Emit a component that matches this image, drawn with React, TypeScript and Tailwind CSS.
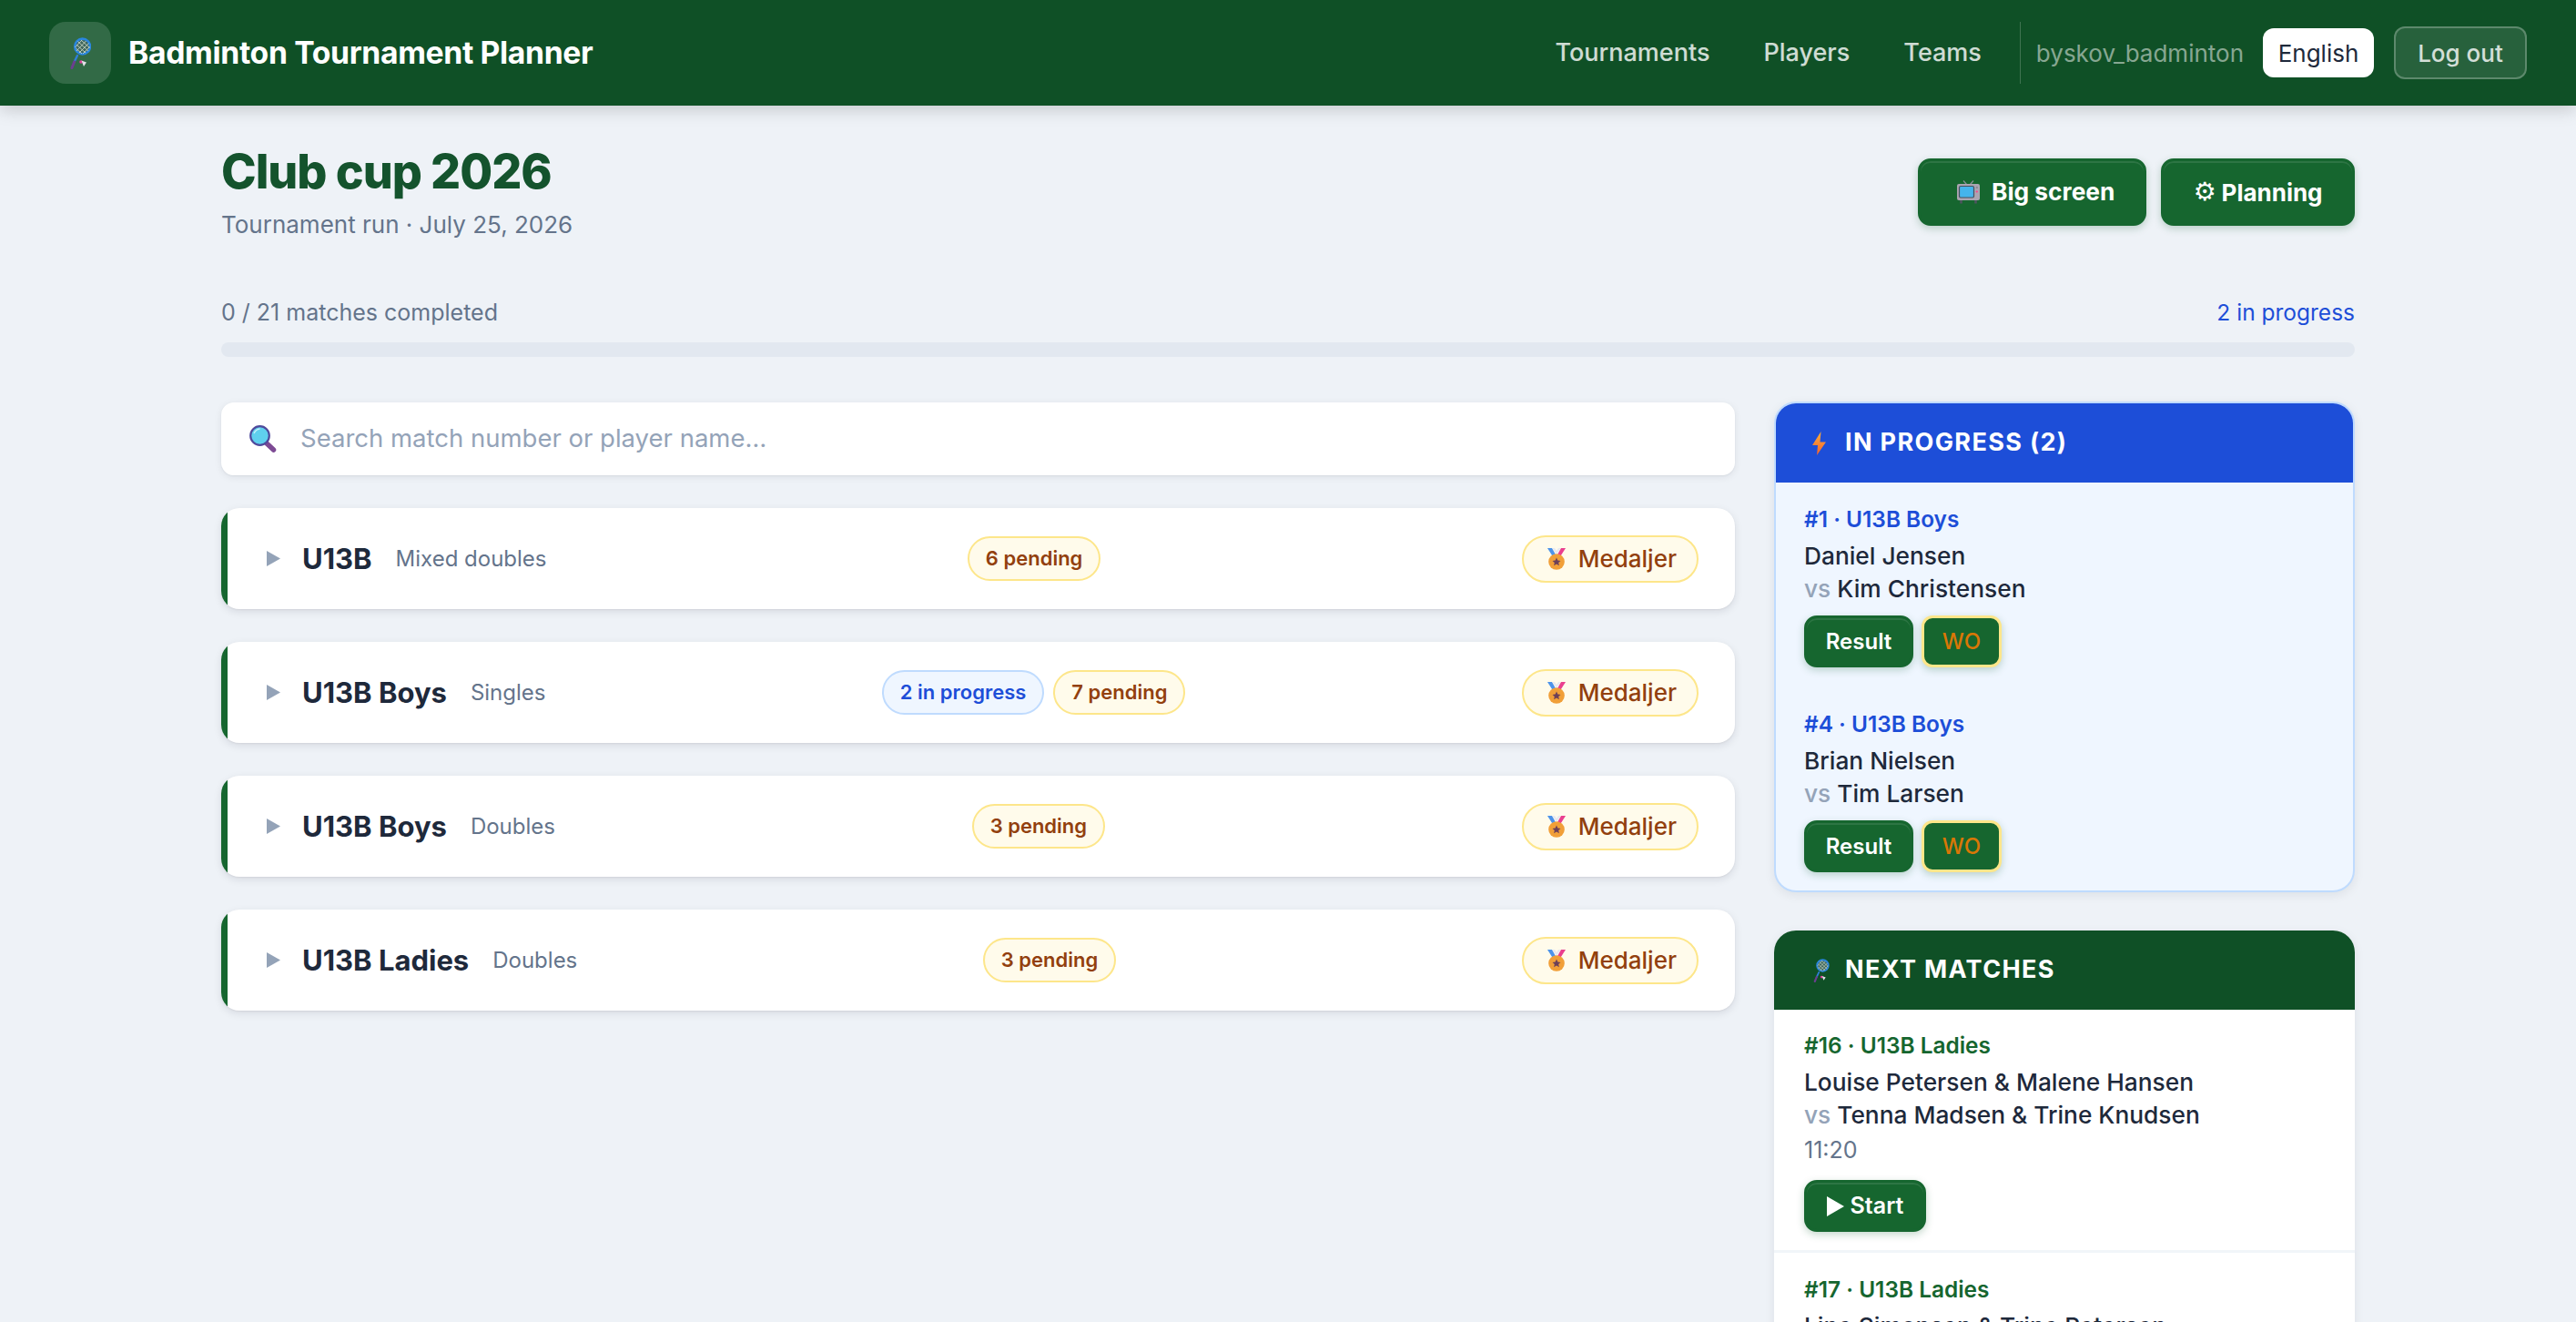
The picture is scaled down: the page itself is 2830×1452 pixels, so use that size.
import type { ReactNode } from 'react'

function RacketIcon({ className }: { className: string }) {
  return (
    <svg viewBox="0 0 24 35" className={className}>
      <path d="M9 20 L5.6 27" stroke="#2f7fd8" strokeWidth="2.4" strokeLinecap="round" />
      <path d="M5.6 27 L3 33.5" stroke="#6b3f8f" strokeWidth="3" strokeLinecap="round" />
      <circle cx="14.6" cy="10" r="8.4" fill="#3f665c" stroke="#2a86de" strokeWidth="2.6" />
      <path
        d="M8 8 L18 17 M9.5 4.5 L21 15 M13 3 L22.5 11.5 M7.5 12 L14 18 M6.5 11 L14 3 M8 15 L18.5 4 M11 17 L21.5 6.5 M15 18 L22.5 10.5"
        stroke="#c7d6c4"
        strokeWidth="0.9"
      />
      <circle cx="13" cy="27" r="1.8" fill="#e0409a" />
      <path d="M13.5 25.6 L19 27.6 L16 32 L14.6 28.4 Z" fill="#e4dfe8" />
    </svg>
  )
}

function SearchIcon() {
  return (
    <svg viewBox="0 0 30 30" className="h-[30px] w-[30px] shrink-0">
      <path d="M19 20 L26.5 27" stroke="#7d4a94" strokeWidth="5.5" strokeLinecap="round" />
      <circle cx="11.5" cy="11.5" r="10.3" fill="#5fd0ee" stroke="#4f4a9c" strokeWidth="2.2" />
      <path d="M5 9 Q7 4.5 11.5 4" stroke="#c4f1fb" strokeWidth="1.4" fill="none" />
    </svg>
  )
}

function TvIcon() {
  return (
    <svg viewBox="0 0 25 26" className="h-[26px] w-[25px] shrink-0">
      <path d="M10.5 4.5 L7 0.5 M14.5 4.5 L18 0.5" stroke="#8a8f98" strokeWidth="1.2" />
      <path d="M4.5 21 L4.5 25.5 M20.5 21 L20.5 25.5" stroke="#4f5460" strokeWidth="2.6" />
      <rect x="0" y="4" width="25" height="18" rx="2" fill="#aaa5b2" />
      <rect x="2.5" y="6.5" width="16" height="12.5" rx="1.5" fill="#45b4ec" stroke="#4a4f5a" strokeWidth="1.2" />
      <circle cx="21.8" cy="8" r="1.2" fill="#8d8a95" />
      <path d="M20.5 12.5 H23 M21.8 11.2 V13.8" stroke="#ef4d8f" strokeWidth="1" />
    </svg>
  )
}

function MedalIcon() {
  return (
    <svg viewBox="0 0 22 25" className="h-[25px] w-[22px] shrink-0">
      <path d="M1 1 L8 12 L11 10 L6 1 Z" fill="#4d93ea" />
      <path d="M21 1 L14 12 L11 10 L16 1 Z" fill="#ea3f8f" />
      <path d="M6.5 1 L11 8 L15.5 1 L13 1 L11 4 L9 1 Z" fill="#e8e8f0" />
      <circle cx="11" cy="16" r="8.8" fill="#f19f38" />
      <path d="M11 11.5 L12.4 14.6 L15.5 14.9 L13.2 17 L13.9 20.2 L11 18.5 L8.1 20.2 L8.8 17 L6.5 14.9 L9.6 14.6 Z" fill="#6d4058" />
    </svg>
  )
}

function BoltIcon() {
  return (
    <svg viewBox="0 0 15 26" className="h-[26px] w-[15px] shrink-0">
      <defs>
        <linearGradient id="bolt" x1="0" y1="0" x2="0" y2="1">
          <stop offset="0" stopColor="#fbb03b" />
          <stop offset="1" stopColor="#f4602f" />
        </linearGradient>
      </defs>
      <path d="M9.5 0 L0 15 L6 15 L5 26 L15 11.5 L8.5 11.5 Z" fill="url(#bolt)" />
    </svg>
  )
}

function Triangle({ className }: { className: string }) {
  return (
    <svg viewBox="0 0 10 12" preserveAspectRatio="none" className={className}>
      <path d="M0 0 L10 6 L0 12 Z" fill="currentColor" />
    </svg>
  )
}

function Pill({ tone, children }: { tone: 'amber' | 'blue'; children: ReactNode }) {
  return (
    <span
      className={
        tone === 'amber'
          ? 'rounded-full border-2 border-[#fde68a] bg-[#fffbeb] px-[18px] py-[8px] text-[22px] leading-[29px] font-semibold text-[#92400e]'
          : 'rounded-full border-2 border-[#bfdbfe] bg-[#eff6ff] px-[18px] py-[8px] text-[22px] leading-[29px] font-semibold text-[#1d4ed8]'
      }
    >
      {children}
    </span>
  )
}

function GreenButton({ children, className }: { children: ReactNode; className: string }) {
  return (
    <button
      className={`inline-flex items-center rounded-[14px] border-[3px] border-[#16662f] bg-[#16662f] text-white shadow-[inset_0_2px_0_rgba(255,255,255,0.1),0_3px_8px_rgba(22,101,52,0.25)] ${className}`}
    >
      {children}
    </button>
  )
}

const events = [
  { name: 'U13B', kind: 'Mixed doubles', progress: 0, pending: 6 },
  { name: 'U13B Boys', kind: 'Singles', progress: 2, pending: 7 },
  { name: 'U13B Boys', kind: 'Doubles', progress: 0, pending: 3 },
  { name: 'U13B Ladies', kind: 'Doubles', progress: 0, pending: 3 },
]

function EventRow({ event }: { event: (typeof events)[number] }) {
  return (
    <div className="flex h-[111px] items-center overflow-hidden rounded-[20px] bg-white pr-[40px] shadow-[0_1px_2px_rgba(15,23,42,0.06),0_3px_10px_rgba(15,23,42,0.1)]">
      <div className="mr-[43px] w-[7px] self-stretch bg-[#16662f]" />
      <Triangle className="mr-[24px] h-[17px] w-[15px] text-[#94a3b8]" />
      <span className="mr-[26px] text-[31px] leading-none font-bold text-[#1e293b]">{event.name}</span>
      <span className="text-[24px] leading-none text-[#64748b]">{event.kind}</span>
      <div className="flex flex-1 items-center justify-center gap-[10px]">
        {event.progress > 0 && <Pill tone="blue">{event.progress} in progress</Pill>}
        <Pill tone="amber">{event.pending} pending</Pill>
      </div>
      <span className="flex h-[52px] items-center gap-[13px] rounded-full border-2 border-[#fde68a] bg-[#fffbeb] pr-[22px] pl-[25px] text-[26px] font-medium text-[#92400e]">
        <MedalIcon />
        Medaljer
      </span>
    </div>
  )
}

function Names({ a, b }: { a: string; b: string }) {
  return (
    <div className="mt-[7px] text-[26.3px] leading-[36px] font-medium text-[#1e293b]">
      <div>{a}</div>
      <div>
        <span className="text-[#94a3b8]">vs</span> {b}
      </div>
    </div>
  )
}

function ActiveMatch({ no, a, b }: { no: number; a: string; b: string }) {
  return (
    <div className="px-[31px] pt-[24px] pb-[22px] last:pb-[20px]">
      <div className="text-[24.4px] leading-[32px] font-semibold text-[#1d4ed8]">#{no} · U13B Boys</div>
      <Names a={a} b={b} />
      <div className="mt-[11px] flex gap-[9px]">
        <GreenButton className="h-[57px] w-[120px] justify-center text-[24px] font-semibold">Result</GreenButton>
        <button className="h-[57px] w-[88px] rounded-[12px] border-[3px] border-[#fde68a] bg-[#16662f] text-[24px] font-medium text-[#d97706] shadow-[0_3px_8px_rgba(22,101,52,0.25)]">
          WO
        </button>
      </div>
    </div>
  )
}

export default function App() {
  return (
    <div className="h-[1452px] overflow-hidden bg-[#eef2f7] font-['Inter','Liberation_Sans',sans-serif]">
      <header className="relative flex h-[116px] items-center bg-[#0f5026] px-[54px] shadow-[0_4px_18px_rgba(0,0,0,0.18)]">
        <div className="flex h-[68px] w-[68px] items-center justify-center rounded-[18px] bg-white/15">
          <RacketIcon className="h-[35px] w-[24px]" />
        </div>
        <h1 className="ml-[19px] text-[33.7px] font-bold tracking-[-0.01em] text-white">Badminton Tournament Planner</h1>
        <nav className="ml-auto flex items-center">
          <a className="text-[27px] font-medium text-white/80">Tournaments</a>
          <a className="ml-[59px] text-[27px] font-medium text-white/80">Players</a>
          <a className="ml-[59px] text-[27px] font-medium text-white/80">Teams</a>
          <div className="mr-[17px] ml-[42px] h-[68px] w-px bg-white/20" />
          <span className="text-[26px] text-white/50">byskov_badminton</span>
          <button className="ml-[21px] h-[54px] w-[122px] rounded-[12px] bg-white text-[26px] text-[#1e293b]">English</button>
          <button className="ml-[22px] h-[58px] w-[146px] rounded-[12px] border-2 border-white/25 bg-white/10 text-[26px] font-medium text-white/80">
            Log out
          </button>
        </nav>
      </header>

      <main className="mx-auto w-[2344px]">
        <div className="flex items-start justify-between pt-[41px]">
          <div>
            <h2 className="text-[52px] leading-[64px] font-extrabold tracking-[-0.02em] text-[#14532d]">Club cup 2026</h2>
            <p className="mt-[9px] text-[26px] leading-[34px] text-[#64748b]">Tournament run · July 25, 2026</p>
          </div>
          <div className="mt-[17px] flex gap-[16px]">
            <GreenButton className="h-[74px] w-[251px] gap-[13px] pl-[40px] text-[26.3px] font-bold">
              <TvIcon />
              Big screen
            </GreenButton>
            <GreenButton className="h-[74px] w-[213px] justify-center gap-[6px] text-[26px] font-bold">
              <span className="font-['DejaVu_Sans'] text-[28px] leading-none font-bold">⚙</span>
              Planning
            </GreenButton>
          </div>
        </div>

        <div className="mt-[62px] flex justify-between leading-[34px]">
          <span className="text-[25px] text-[#64748b]">0 / 21 matches completed</span>
          <span className="text-[24.5px] text-[#1d4ed8]">2 in progress</span>
        </div>
        <div className="mt-[16px] h-[16px] rounded-full bg-[#e2e8f0]" />

        <div className="mt-[50px] flex items-start gap-[43px]">
          <div className="flex w-[1663px] flex-col gap-[36px]">
            <div className="flex h-[80px] items-center gap-[26px] rounded-[14px] bg-white px-[31px] shadow-[0_1px_2px_rgba(15,23,42,0.05),0_2px_8px_rgba(15,23,42,0.08)]">
              <SearchIcon />
              <span className="text-[27.5px] text-[#94a3b8]">Search match number or player name…</span>
            </div>
            {events.map(event => (
              <EventRow key={event.name + event.kind} event={event} />
            ))}
          </div>

          <aside className="-mt-px flex w-[638px] flex-col gap-[42px]">
            <section className="overflow-hidden rounded-[24px] border-2 border-[#bfdbfe] bg-[#eff6ff] shadow-[0_3px_12px_rgba(15,23,42,0.08)]">
              <div className="flex h-[87px] items-center gap-[21px] bg-[#1d4ed8] pl-[40px] text-[27px] font-bold tracking-[0.05em] text-white">
                <BoltIcon />
                IN PROGRESS (2)
              </div>
              <ActiveMatch no={1} a="Daniel Jensen" b="Kim Christensen" />
              <ActiveMatch no={4} a="Brian Nielsen" b="Tim Larsen" />
            </section>

            <section className="overflow-hidden rounded-[24px] bg-white shadow-[0_3px_12px_rgba(15,23,42,0.08)]">
              <div className="flex h-[87px] items-center gap-[17px] bg-[#0f5026] pl-[42px] text-[27px] font-bold tracking-[0.05em] text-white">
                <RacketIcon className="h-[26px] w-[19px]" />
                NEXT MATCHES
              </div>
              <div className="border-b-[3px] border-[#f1f5f9] px-[33px] pt-[23px] pb-[20px]">
                <div className="text-[24.4px] leading-[32px] font-semibold text-[#16662f]">#16 · U13B Ladies</div>
                <Names a="Louise Petersen & Malene Hansen" b="Tenna Madsen & Trine Knudsen" />
                <div className="mt-[3px] text-[25px] leading-[34px] text-[#64748b]">11:20</div>
                <GreenButton className="mt-[16px] h-[57px] w-[134px] justify-center gap-[7px] text-[25px] font-semibold">
                  <Triangle className="h-[22px] w-[19px] text-white" />
                  Start
                </GreenButton>
              </div>
              <div className="px-[33px] pt-[24px] pb-[21px]">
                <div className="text-[24.4px] leading-[32px] font-semibold text-[#16662f]">#17 · U13B Ladies</div>
                <Names a="Line Simonsen & Trine Petersen" b="Anne Poulsen & Sofie Rasmussen" />
              </div>
            </section>
          </aside>
        </div>
      </main>
    </div>
  )
}
